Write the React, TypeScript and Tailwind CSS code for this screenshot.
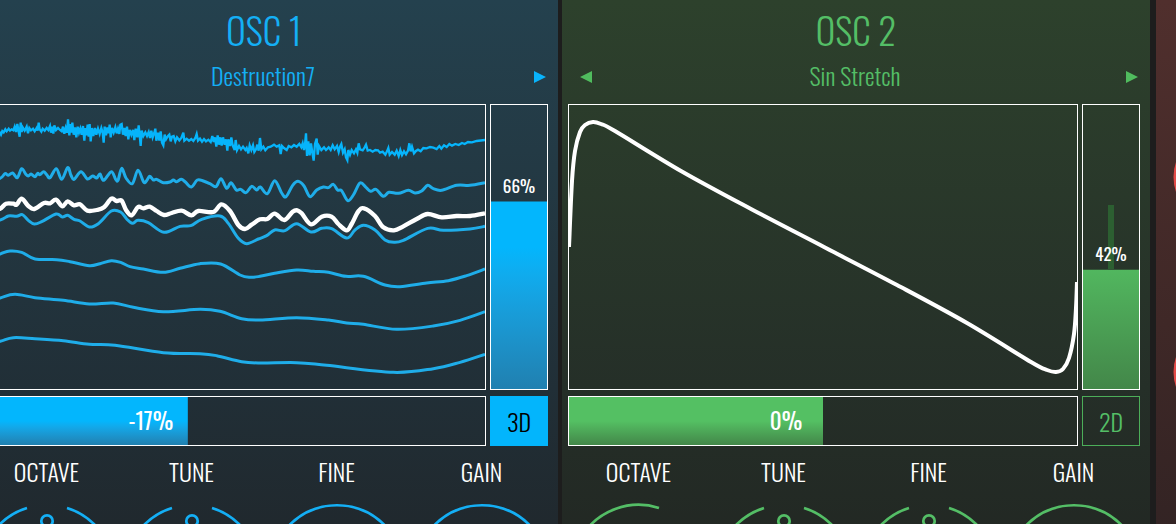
import { clsx } from 'clsx';

type Point = [number, number];
type Tone = 'blue' | 'green';

/** Smooth path through the points (Catmull-Rom converted to beziers). */
function smooth(points: Point[]) {
  let d = `M${points[0][0]} ${points[0][1]}`;
  for (let i = 0; i < points.length - 1; i++) {
    const p0 = points[i - 1] ?? points[i];
    const p1 = points[i];
    const p2 = points[i + 1];
    const p3 = points[i + 2] ?? p2;
    const x1 = p1[0] + (p2[0] - p0[0]) / 6;
    const y1 = p1[1] + (p2[1] - p0[1]) / 6;
    const x2 = p2[0] - (p3[0] - p1[0]) / 6;
    const y2 = p2[1] - (p3[1] - p1[1]) / 6;
    d += `C${x1} ${y1} ${x2} ${y2} ${p2[0]} ${p2[1]}`;
  }
  return d;
}

/** Jagged path, for the frame with the most harmonics. */
function jagged(points: Point[]) {
  return 'M' + points.map((p) => p.join(' ')).join('L');
}

const NOISE: Point[] = [
  [-72, 108], [-50, 98], [-20, 104], [0, 98], [3, 104], [7, 93], [11, 97], [16, 88], [20, 94], [26, 86],
  [30, 92], [35, 88], [40, 91], [44, 80], [48, 96], [52, 72], [55, 90], [59, 110], [62, 68], [65, 96],
  [68, 82], [74, 92], [80, 80], [84, 100], [88, 84], [93, 91], [99, 86], [104, 94], [110, 84], [113, 92],
  [116, 68], [119, 88], [124, 95], [128, 86], [134, 92], [140, 84], [145, 90], [150, 78], [153, 98], [157, 80],
  [160, 101], [163, 76], [168, 90], [174, 84], [180, 90], [185, 94], [189, 80], [193, 101], [197, 84], [201, 98],
  [204, 58], [208, 106], [212, 72], [214, 98], [217, 68], [221, 104], [225, 82], [229, 112], [233, 80], [237, 98],
  [241, 86], [245, 104], [249, 78], [253, 122], [256, 84], [259, 106], [263, 74], [266, 110], [269, 72], [272, 124],
  [276, 84], [280, 108], [285, 84], [289, 104], [294, 86], [299, 102], [304, 84], [308, 98], [311, 128], [314, 80],
  [318, 106], [322, 82], [326, 100], [329, 74], [332, 112], [336, 84], [341, 98], [346, 82], [350, 100], [354, 86],
  [358, 102], [361, 74], [365, 72], [369, 104], [373, 84], [377, 108], [381, 80], [385, 118], [389, 90], [394, 104],
  [399, 90], [403, 120], [407, 86], [412, 112], [416, 76], [419, 106], [422, 138], [425, 92], [430, 108], [436, 97],
  [441, 108], [446, 96], [450, 114], [454, 92], [458, 112], [463, 98], [466, 86], [469, 122], [474, 98], [478, 122],
  [482, 94], [486, 128], [490, 136], [494, 104], [498, 118], [504, 108], [508, 104], [512, 124], [516, 110], [521, 108],
  [526, 124], [531, 112], [538, 121], [544, 114], [550, 98], [553, 122], [560, 116], [567, 122], [574, 117], [580, 123],
  [586, 114], [590, 102], [594, 122], [600, 116], [606, 125], [612, 117], [618, 124], [625, 119], [632, 126], [637, 108],
  [641, 126], [645, 112], [649, 140], [653, 106], [657, 134], [661, 112], [665, 137], [669, 112], [674, 134], [678, 118],
  [682, 152], [685, 118], [690, 138], [694, 112], [698, 136], [704, 150], [707, 120], [711, 150], [717, 138], [723, 148],
  [729, 140], [736, 150], [740, 144], [745, 160], [749, 136], [754, 150], [759, 136], [763, 156], [768, 148], [772, 134],
  [776, 152], [780, 114], [784, 148], [790, 140], [796, 151], [804, 142], [812, 140], [822, 134], [830, 140], [838, 136],
  [842, 162], [846, 138], [852, 144], [860, 150], [866, 138], [874, 142], [882, 135], [890, 140], [898, 132], [904, 142],
  [908, 130], [912, 150], [915, 134], [918, 100], [921, 168], [925, 124], [929, 166], [933, 130], [937, 158], [941, 182],
  [945, 132], [950, 116], [953, 164], [957, 138], [964, 150], [972, 142], [978, 150], [986, 142], [992, 150], [998, 136],
  [1004, 148], [1011, 138], [1016, 156], [1020, 140], [1024, 132], [1029, 158], [1034, 148], [1038, 172], [1042, 180], [1045, 150],
  [1050, 164], [1055, 150], [1062, 160], [1068, 148], [1072, 158], [1076, 130], [1080, 148], [1088, 151], [1094, 142], [1098, 134],
  [1103, 152], [1110, 150], [1118, 155], [1126, 150], [1134, 151], [1140, 158], [1148, 155], [1156, 164], [1161, 154], [1165, 144],
  [1169, 164], [1176, 156], [1184, 164], [1190, 152], [1196, 168], [1201, 150], [1206, 165], [1212, 154], [1218, 163], [1224, 152],
  [1228, 130], [1232, 154], [1236, 140], [1242, 160], [1248, 153], [1254, 149], [1262, 154], [1270, 144], [1280, 145], [1290, 141],
  [1300, 143], [1310, 147], [1318, 138], [1324, 146], [1332, 136], [1340, 141], [1348, 132], [1356, 137], [1366, 132], [1376, 135],
  [1386, 129], [1394, 132], [1404, 126], [1416, 127], [1430, 123], [1455, 120],
];

const HARMONICS: Point[] = [
  [-72, 228], [-40, 240], [0, 235], [15, 221], [25, 226], [38, 219], [52, 233], [65, 206], [77, 222], [85, 228],
  [93, 222], [105, 230], [113, 220], [120, 224], [131, 215], [140, 224], [150, 233], [169, 206], [185, 238], [203, 203],
  [213, 226], [222, 238], [243, 215], [262, 237], [278, 228], [290, 234], [300, 222], [311, 241], [334, 215], [347, 238],
  [354, 241], [365, 205], [378, 234], [397, 251], [414, 211], [431, 246], [440, 242], [449, 229], [460, 240], [470, 238],
  [490, 248], [510, 246], [520, 240], [530, 245], [544, 238], [556, 246], [574, 261], [592, 240], [610, 243], [630, 251],
  [648, 260], [663, 236], [680, 265], [693, 248], [709, 270], [722, 268], [738, 278], [755, 259], [770, 270], [781, 261],
  [802, 281], [824, 242], [845, 279], [858, 290], [878, 256], [894, 244], [912, 258], [930, 290], [950, 270], [970, 261],
  [985, 263], [1000, 253], [1013, 270], [1025, 272], [1043, 302], [1060, 285], [1080, 249], [1098, 262], [1112, 274],
  [1128, 268], [1150, 289], [1167, 277], [1195, 280], [1225, 271], [1245, 279], [1265, 273], [1283, 256], [1300, 266],
  [1325, 271], [1370, 256], [1410, 256], [1455, 248],
];

const CURRENT: Point[] = [
  [-72, 330], [-30, 330], [0, 326], [18, 311], [40, 311], [50, 314], [65, 296], [85, 318], [103, 327], [132, 309],
  [150, 310], [168, 299], [187, 319], [203, 304], [222, 316], [240, 313], [262, 332], [290, 330], [312, 322], [334, 296],
  [350, 303], [365, 302], [378, 330], [395, 346], [414, 321], [430, 325], [449, 320], [470, 333], [492, 345], [515, 339],
  [545, 332], [574, 346], [595, 333], [640, 336], [664, 313], [690, 333], [715, 375], [735, 387], [755, 374], [780, 358],
  [802, 357], [824, 341], [853, 360], [878, 335], [892, 331], [905, 340], [933, 373], [965, 350], [995, 350], [1015, 372],
  [1040, 391], [1055, 372], [1075, 334], [1092, 325], [1125, 348], [1150, 382], [1182, 391], [1210, 379], [1250, 357],
  [1283, 342], [1325, 352], [1370, 348], [1410, 348], [1455, 340],
];

const FRAMES: Point[][] = [
  HARMONICS,
  [
    [-72, 375], [0, 360], [25, 348], [50, 349], [67, 344], [85, 361], [103, 372], [125, 365], [168, 342], [187, 351],
    [203, 346], [222, 358], [240, 363], [268, 381], [295, 371], [334, 333], [362, 336], [380, 357], [397, 370],
    [414, 361], [445, 368], [492, 397], [540, 379], [572, 377], [605, 358], [660, 348], [685, 370], [715, 415],
    [740, 431], [775, 417], [800, 407], [824, 390], [855, 392], [890, 371], [933, 396], [965, 385], [995, 386],
    [1040, 414], [1065, 390], [1090, 376], [1125, 390], [1155, 420], [1182, 427], [1210, 421], [1283, 385],
    [1330, 391], [1410, 387], [1455, 379],
  ],
  [
    [-72, 490], [0, 462], [30, 453], [65, 457], [105, 477], [170, 479], [210, 485], [268, 497], [300, 491], [334, 482],
    [362, 487], [390, 500], [430, 507], [490, 517], [540, 505], [600, 491], [662, 492], [720, 525], [750, 532],
    [780, 529], [824, 520], [890, 510], [940, 514], [985, 517], [1038, 529], [1090, 529], [1155, 555], [1200, 560],
    [1280, 549], [1345, 542], [1400, 527], [1455, 507],
  ],
  [
    [-72, 620], [0, 594], [45, 583], [105, 593], [190, 601], [268, 612], [340, 609], [400, 622], [490, 635],
    [600, 628], [660, 634], [725, 656], [780, 660], [890, 653], [985, 660], [1040, 669], [1090, 673], [1190, 688],
    [1300, 678], [1380, 661], [1455, 635],
  ],
  [
    [-72, 745], [0, 724], [40, 713], [105, 716], [190, 722], [268, 733], [345, 736], [490, 758], [600, 761],
    [650, 767], [725, 785], [780, 789], [890, 788], [980, 796], [1180, 817], [1300, 806], [1380, 787], [1455, 763],
  ],
];

const SIN_STRETCH: Point[] = [
  [0, 142], [3, 76], [6, 46], [11, 27], [16, 20], [24, 17], [32, 19], [46, 26], [112, 66], [182, 104], [255, 142],
  [328, 180], [398, 218], [462, 257], [478, 265], [487, 267], [494, 264], [500, 253], [505, 229], [507, 203], [508, 177],
];

const TEXT = { blue: 'text-[#14aff5]', green: 'text-[#54be66]' };
const BRIGHT = { blue: 'text-[#09b3fb]', green: 'text-[#50bc5e]' };

function Arrow({ direction, label, tone }: { direction: 'left' | 'right'; label: string; tone: Tone }) {
  return (
    <button type="button" aria-label={label} className={clsx(BRIGHT[tone], direction === 'right' && 'pl-2')}>
      <svg viewBox="0 0 12 12" className="size-3" fill="currentColor">
        <path d={direction === 'left' ? 'M0 6L12 0V12Z' : 'M12 6L0 0V12Z'} />
      </svg>
    </button>
  );
}

function Fill({ tone, value, vertical }: { tone: Tone; value: number; vertical?: boolean }) {
  const clipPath = vertical ? `inset(${100 - value}% 0 0 0)` : `inset(0 ${100 - value}% 0 0)`;
  return (
    <div
      className={clsx(
        'absolute inset-0 bg-linear-to-b from-50%',
        tone === 'blue' ? 'from-[#03b6fd] to-[#2080b0]' : 'from-[#54c063] to-[#438749]'
      )}
      style={{ clipPath }}
    />
  );
}

function PositionSlider({ tone, value }: { tone: Tone; value: number }) {
  return (
    <label className="relative h-[286px] w-[58px] border border-white">
      {tone === 'green' && (
        <span className="absolute top-[100px] bottom-1/2 left-[25px] min-h-16 w-1.5 bg-[#2c5f31]" />
      )}
      <Fill tone={tone} value={value} vertical />
      <span
        className="absolute inset-x-0 text-center text-[17px] leading-8 font-normal text-white"
        style={{ bottom: `${value}%` }}
      >
        {value}%
      </span>
      <input
        type="range"
        aria-label="Wavetable position"
        defaultValue={value}
        className="absolute inset-0 h-full w-full opacity-0"
      />
    </label>
  );
}

function WarpSlider({ tone, value }: { tone: Tone; value: number }) {
  const fill = (value + 100) / 2;
  return (
    <label className="relative h-[50px] min-w-0 flex-1 border border-white">
      <Fill tone={tone} value={fill} />
      <span
        className="absolute inset-y-0 left-0 flex justify-end text-[23px] leading-[46px] font-normal text-white"
        style={{ width: `${fill}%` }}
      >
        <span className="w-[74px] text-center">{value}%</span>
      </span>
      <input
        type="range"
        aria-label="Warp"
        min={-100}
        max={100}
        defaultValue={value}
        className="absolute inset-0 h-full w-full opacity-0"
      />
    </label>
  );
}

// All rings share the centre 75,70 and a radius of 67.
const RINGS = {
  stopped: 'M27 117A67 67 0 0 1 95 6',
  split: 'M55 6A67 67 0 0 0 27 117M95 6A67 67 0 0 1 123 117',
  full: 'M27 117A67 67 0 1 1 123 117',
};

type Ring = keyof typeof RINGS;

function Knob({ name, ring, tone }: { name: string; ring: Ring; tone: Tone }) {
  return (
    <div className="flex flex-col items-center">
      <span className="text-2xl leading-8 text-white">{name}</span>
      <svg
        viewBox="0 0 150 144"
        fill="none"
        stroke="currentColor"
        strokeWidth={2.7}
        className={clsx('mt-[15px] h-36 w-[150px] shrink-0', TEXT[tone])}
      >
        <path d={RINGS[ring]} />
        {ring === 'split' && <circle cx="75" cy="19" r="5.700" />}
      </svg>
    </div>
  );
}

type PanelProps = {
  tone: Tone;
  title: string;
  wave: string;
  position: number;
  warp: number;
  mode: '2D' | '3D';
  octave: Ring;
  tune: Ring;
  fine: Ring;
  children: React.ReactNode;
};

function Oscillator({ tone, title, wave, position, warp, mode, octave, tune, fine, children }: PanelProps) {
  return (
    <section
      className={clsx(
        'min-w-0 flex-1 bg-linear-to-b',
        tone === 'blue'
          ? 'from-[#24414e] via-[#212f37] via-60% to-[#1f2326]'
          : 'from-[#2d412c] via-[#252f28] via-60% to-[#202320]'
      )}
    >
      <header className={clsx('flex flex-col items-center pt-2.5', TEXT[tone])}>
        <h2 className="text-[37px] leading-10">{title}</h2>
        <div className="mt-[9px] flex h-9 w-full items-center justify-between pr-3 pl-[18px]">
          <Arrow direction="left" label="Previous wavetable" tone={tone} />
          <span className="pb-1 text-2xl leading-8">{wave}</span>
          <Arrow direction="right" label="Next wavetable" tone={tone} />
        </div>
      </header>

      <div className="mt-[9px] flex flex-col gap-1.5 pr-[10px] pl-1.5">
        <div className="flex gap-1">
          <div className="h-[286px] min-w-0 flex-1 border border-white">{children}</div>
          <PositionSlider tone={tone} value={position} />
        </div>
        <div className="flex gap-1">
          <WarpSlider tone={tone} value={warp} />
          <button
            type="button"
            className={clsx(
              'h-[50px] w-[58px] text-2xl',
              mode === '3D' ? 'bg-[#03b5fc] text-black' : 'border border-[#4cae59] text-[#54be66]'
            )}
          >
            {mode}
          </button>
        </div>
      </div>

      <div className="mt-[9px] grid grid-cols-4 px-1">
        <Knob name="OCTAVE" ring={octave} tone={tone} />
        <Knob name="TUNE" ring={tune} tone={tone} />
        <Knob name="FINE" ring={fine} tone={tone} />
        <Knob name="GAIN" ring="full" tone={tone} />
      </div>
    </section>
  );
}

export default function App() {
  return (
    <main className="h-screen overflow-hidden bg-[#1d1d1d] font-[Oswald,'Open_Sans_Condensed',sans-serif] font-light">
      <div className="-ml-[30px] flex">
        <Oscillator
          tone="blue"
          title="OSC 1"
          wave="Destruction7"
          position={66}
          warp={-17}
          mode="3D"
          octave="split"
          tune="split"
          fine="full"
        >
          <svg
            viewBox="-69 15 1524 852"
            preserveAspectRatio="none"
            fill="none"
            stroke="#1fade9"
            strokeWidth={9}
            className="h-full w-full"
          >
            <path d={jagged(NOISE)} stroke="#06b4fb" strokeWidth={7} />
            {FRAMES.map((points, i) => (
              <path key={i} d={smooth(points)} />
            ))}
            <path d={smooth(CURRENT)} stroke="#fff" strokeWidth={13} />
          </svg>
        </Oscillator>

        <div className="w-1 shrink-0" />

        <Oscillator
          tone="green"
          title="OSC 2"
          wave="Sin Stretch"
          position={42}
          warp={0}
          mode="2D"
          octave="stopped"
          tune="split"
          fine="split"
        >
          <svg viewBox="0 0 508 284" preserveAspectRatio="none" fill="none" className="h-full w-full">
            <path d={smooth(SIN_STRETCH)} stroke="#fff" strokeWidth={4} />
          </svg>
        </Oscillator>

        <div className="w-1.5 shrink-0" />

        <aside className="w-5 shrink-0 overflow-hidden bg-linear-to-b from-[#502f2d] via-[#3f2827] to-[#2c2122]">
          <div className="mt-[133px] ml-[17px] flex w-[88px] flex-col gap-[107px] text-[#e24b48]">
            <svg viewBox="0 0 88 88" fill="none" stroke="currentColor" strokeWidth={3}>
              <circle cx="44" cy="44" r="42" />
            </svg>
            <svg viewBox="0 0 88 88" fill="none" stroke="currentColor" strokeWidth={3}>
              <circle cx="44" cy="44" r="42" />
            </svg>
          </div>
        </aside>
      </div>
    </main>
  );
}
